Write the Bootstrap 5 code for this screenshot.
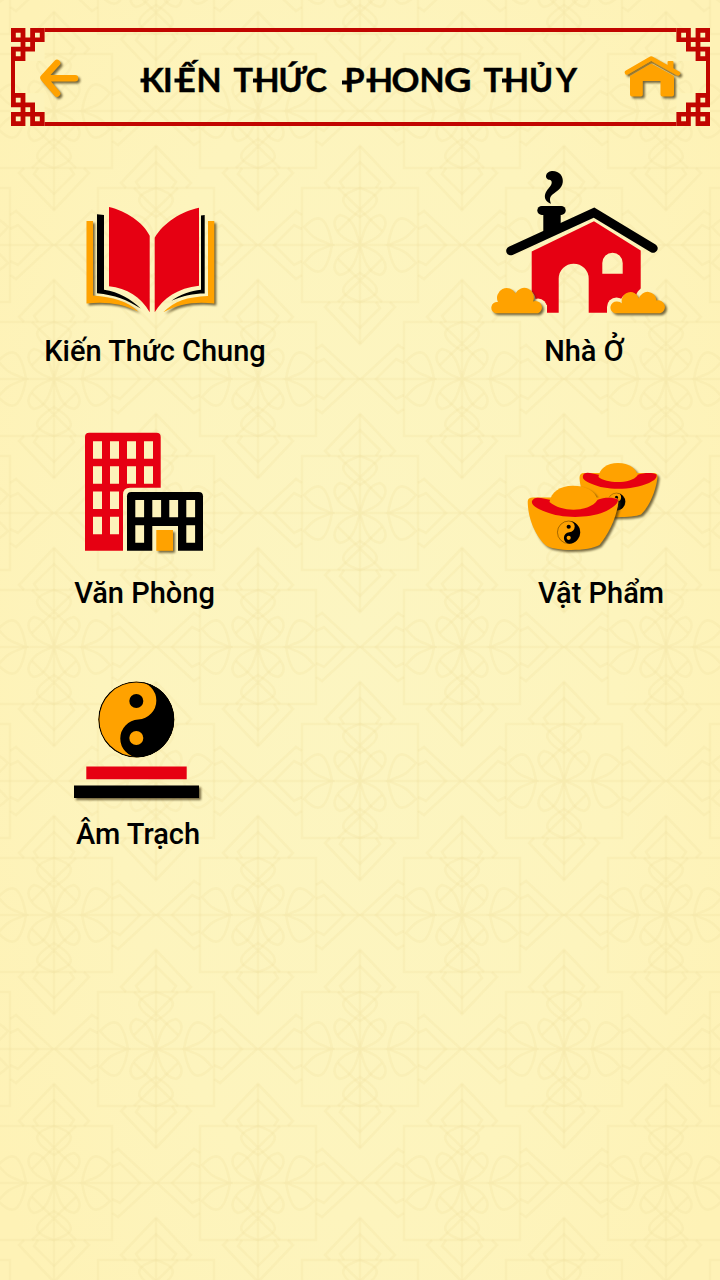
<!DOCTYPE html>
<html lang="vi">
<head>
<meta charset="utf-8">
<meta name="viewport" content="width=device-width, initial-scale=1">
<title>Kiến Thức Phong Thủy</title>
<link href="https://cdn.jsdelivr.net/npm/bootstrap@5.3.0/dist/css/bootstrap.min.css" rel="stylesheet">
<style>
  body { font-family: Roboto, "Noto Sans", sans-serif; color: #000; background: #fdf3bb; }
  .screen { width: 720px; height: 1280px; background: radial-gradient(ellipse 60% 75% at 50% 50%, #fcf5c1 0%, #fdf4bd 60%, #fef2b6 100%); }
  .backdrop { z-index: 0; }
  .title-bar { height: 98px; margin: 28px 10px 0 11px; border: 4px solid #c10500; }
  .title-bar .frame-corners { top: -4px; left: -4px; }
  .title-text { font-family: Lato, "Open Sans", sans-serif; font-weight: 700; stroke: #000; stroke-width: .4px; }
  .topics { padding-top: 34px; }
  .topic-row { height: 241.6px; }
  .topic { color: #000; }
  .topic-label { font-size: 29px; font-weight: 500; line-height: 42px; }
  .w-chung { width: 310px; }
  .w-nha { width: 272px; }
  .w-van { width: 289px; }
  .w-vat { width: 238px; }
  .w-am { width: 276px; }
  .shade { filter: drop-shadow(2px 2px .8px rgba(60, 45, 10, .7)); }
</style>
</head>
<body>
<main class="screen position-relative overflow-hidden">
  <svg class="backdrop position-absolute top-0 start-0" width="720" height="1280" aria-hidden="true">
    <defs>
      <g id="motif" fill="none" stroke="#efdf9e" stroke-width="2.6" stroke-opacity=".26">
        <rect x="-58" y="-57" width="116" height="114"/>
        <path d="M-102 0H102M0-99V99" />
        <path d="M-58-30l-6-4L-101 0l37 34 6-4M58-30l6-4L101 0 64 34l-6-4"/>
        <path d="M-30-57l-5-5L0-99 35-62l-5 5M-30 57l-5 5L0 99 35 62l-5-5"/>
        <path d="M-58-16l-8-4L-86 0l20 20 8-4M58-16l8-4L86 0 66 20l-8-4M-16-57l-4-6L0-83l20 20-4 6M-16 57l-4 6L0 83l20-20-4-6"/>
        <path d="M0-28C-28-45-16-52 0-57 16-52 28-45 0-28ZM0 28C-28 45-16 52 0 57 16 52 28 45 0 28Z"/>
        <path d="M-28 0C-34-34-44-30-56-18-46-6-44-6-28 0-44 6-46 6-56 18-44 30-34 34-28 0ZM28 0C34-34 44-30 56-18 46-6 44-6 28 0 44 6 46 6 56 18 44 30 34 34 28 0Z"/>
        <path d="M0 0C-28-8-30-26-20-30-8-28-4-16 0 0 4-16 8-28 20-30 30-26 28-8 0 0-28 8-30 26-20 30-8 28-4 16 0 0 4 16 8 28 20 30 30 26 28 8 0 0Z"/>
        <path d="M-22-57L22-14M22-57L-22-14M-22 57L22 14M22 57L-22 14"/>
      </g>
      <pattern id="lattice" width="204" height="268" patternUnits="userSpaceOnUse" x="54" y="915">
        <use href="#motif"/><use href="#motif" x="204"/>
        <use href="#motif" y="268"/><use href="#motif" x="204" y="268"/>
        <use href="#motif" x="102" y="134"/>
      </pattern>
    </defs>
    <rect width="720" height="1280" fill="url(#lattice)"/>
  </svg>

  <header class="title-bar position-relative">
    <svg class="frame-corners position-absolute" width="699" height="98" viewBox="11 28 699 98">
      <defs>
        <g id="corner">
          <rect width="33.6" height="32.9" fill="#fdf3ba"/>
          <path fill="#c10500" fill-rule="evenodd" transform="scale(4.8 4.7)" d="M0 0h3v2h1V0h3v3H5v2H3v2H0V4h2V3H0ZM1 1v1h1V1ZM5 1v1h1V1ZM3 3v1h1V3ZM1 5v1h1V5Z"/>
        </g>
      </defs>
      <use href="#corner" transform="translate(11 28)"/>
      <use href="#corner" transform="translate(710 28) scale(-1 1)"/>
      <use href="#corner" transform="translate(11 126) scale(1 -1)"/>
      <use href="#corner" transform="translate(710 126) scale(-1 -1)"/>
    </svg>
    <div class="d-flex justify-content-between align-items-center h-100 position-relative">
      <a href="#" aria-label="Quay lại" class="d-block">
        <svg class="d-block" width="100" height="90" viewBox="15 32 100 90">
          <path class="shade" d="M57 63 43.500 77.800 57 93.500M45 78.200H75" fill="none" stroke="#ffa200" stroke-width="6.600" stroke-linecap="round" stroke-linejoin="round"/>
        </svg>
      </a>
      <h1 class="m-0 lh-1">
        <svg class="d-block" width="470" height="90" viewBox="126 32 470 90">
          <text class="title-text" font-size="32.500" y="91.700" x="141.500 163 177 196.500 226 233.500 254.500 278.500 305.500 330 344.500 368">KIẾN THỨC PH<tspan x="391.500" textLength="28" lengthAdjust="spacingAndGlyphs">O</tspan><tspan x="419.500">N</tspan><tspan x="444" textLength="27.500" lengthAdjust="spacingAndGlyphs">G</tspan><tspan x="475 483.500 504 529 556"> THỦY</tspan></text>
          <path d="M140.500 80.500h6M174.500 80.500h7M253 80.500h6M342 82.500h7M366.500 80.500h6M502 80.500h7" stroke="#000" stroke-width="4"/>
        </svg>
      </h1>
      <a href="#" aria-label="Trang chủ" class="d-block">
        <svg class="d-block" width="100" height="90" viewBox="606.500 32 100 90">
          <g class="shade" fill="#ffa200">
            <path d="M668 68V62q0-1 1-1h4q1 0 1 1v8Z"/>
            <path d="M627.500 72.500 651.700 58.500 678.500 73.500" fill="none" stroke="#ffa200" stroke-width="4.500" stroke-linejoin="round" stroke-linecap="round"/>
            <path d="M630.500 76 651.700 63.500 674.500 76V94.500q0 2-2 2H663q-2 0-2-2V81H643.300V94.500q0 2-2 2H632.500q-2 0-2-2Z"/>
          </g>
          <path d="M629 75.500 651.700 62 676 75.500" fill="none" stroke="#a87c20" stroke-width="1"/>
        </svg>
      </a>
    </div>
  </header>

  <section class="topics position-relative">
    <div class="topic-row d-flex justify-content-between">
      <a href="#" class="topic w-chung d-flex flex-column align-items-center text-decoration-none">
        <svg width="200" height="170" viewBox="55 160 200 170">
          <g class="shade" fill="#ffa200">
            <path d="M86.500 221H93V295.500C113 297 127 301 138.500 311.700 122 303.500 106 301.500 86.500 303.500Z"/>
            <path d="M208 221H214.300V303.500C195 301.500 179 303.500 163.300 312.300 174 301 187 297 208 296Z"/>
          </g>
          <path d="M97 214.300 104 215V289.700C119 292 131 299 140.700 308.500 127 300 115 295 97 293.300Z"/>
          <path d="M201 215.500 204.700 215V293.500C193 293.500 183 296 171.500 300.700 180 294 191 291 201 289.700Z"/>
          <path fill="#e60012" d="M109 207C126 211 143 222 149.700 235.700V312.300C141 297 127 288 109 286.300Z"/>
          <path fill="#e60012" d="M199 207.700C182 211 163 223 154.700 237.700V312.300C163 298 178 288 199 285.700Z"/>
        </svg>
        <span class="topic-label">Kiến Thức Chung</span>
      </a>
      <a href="#" class="topic w-nha d-flex flex-column align-items-center text-decoration-none">
        <svg width="200" height="170" viewBox="484 160 200 170">
          <path fill="#e60012" fill-rule="evenodd" d="M531.700 251.500 594 221.300 640.700 250.500V312.800H588.700V278.700a15 15 0 0 0-30 0V312.800H531.700ZM602.300 273.700H622.700V263a10.200 10.200 0 0 0-20.400 0Z"/>
          <path d="M510.700 250.800 594 212.600 653.200 248.300" fill="none" stroke="#000" stroke-width="9" stroke-linecap="round"/>
          <path d="M543.300 210H560.700V229L543.300 237Z"/>
          <rect x="537.300" y="206" width="28.400" height="8.900" rx="4.450"/>
          <path d="M551 203.700C546 202 544 198 545.200 194 546.500 189.500 551 187 551.700 183 552 180 550 180 548 179.500 544.500 177.500 545.500 172 551.700 171 559 170.500 563.500 176 562.800 182 562 189 556 191.500 552.500 194.500 549.500 197 549.500 200 551 203.700Z"/>
          <g fill="#fdf3bb">
            <circle cx="524" cy="300.500" r="11.500"/><circle cx="538" cy="307.500" r="9"/><circle cx="616.500" cy="307" r="9.500"/><circle cx="630.500" cy="303.500" r="10.500"/><circle cx="647.700" cy="298.500" r="12"/>
            <path d="M524 305H547V315H524ZM607 307H660V315H607Z"/>
          </g>
          <g class="shade" fill="#ffa200">
            <path d="M496 313.300a5.600 5.600 0 0 1 2-11.200A9.300 9.300 0 0 1 515.500 293.500 9.300 9.300 0 0 1 533 301.500 6.200 6.200 0 0 1 538 313.300Z"/>
            <path d="M615 313.300a6 6 0 0 1 2-11.800q3 0 5 2A8 8 0 0 1 639 298.500 8.900 8.900 0 0 1 656.500 300.500 6.500 6.500 0 0 1 660 313.300Z"/>
          </g>
        </svg>
        <span class="topic-label">Nhà Ở</span>
      </a>
    </div>

    <div class="topic-row d-flex justify-content-between">
      <a href="#" class="topic w-van d-flex flex-column align-items-center text-decoration-none">
        <svg width="200" height="170" viewBox="45 402 200 170">
          <path fill="#e60012" d="M85 437q0-4.200 4.200-4.200H156.500q4.200 0 4.200 4.200V487.700H130q-7 0-7 7V550.700H85Z"/>
          <path d="M127 496.300q0-4.300 4.300-4.300H198.700q4.300 0 4.300 4.300V550.700H127Z"/>
          <g fill="#fdf3bb">
            <path d="M93 441.300h9v17.400h-9zm17 0h9v17.400h-9zm17 0h9v17.400h-9zm17 0h9v17.400h-9zM93 466.300h9v17.400h-9zm17 0h9v17.400h-9zm17 0h9v17.400h-9zm17 0h9v17.400h-9zM93 491.600h9v17.400h-9zm17 0h9v17.400h-9zM93 516.800h9v17.400h-9zm17 0h9v17.400h-9z"/>
            <path d="M135.300 500h8.800v17.200h-8.800zm17 0h8.800v17.200h-8.800zm17 0h8.800v17.200h-8.800zm17 0h8.800v17.200h-8.800zM135.300 525.300h8.800v17.400h-8.800zm51 0h8.800v17.400h-8.800zM152.300 526H178v25H152.300z"/>
          </g>
          <path class="shade" fill="#ffa200" d="M156.300 530H173V550.800H156.300Z"/>
        </svg>
        <span class="topic-label">Văn Phòng</span>
      </a>
      <a href="#" class="topic w-vat d-flex flex-column align-items-center text-decoration-none">
        <svg width="200" height="170" viewBox="501 402 200 170">
          <defs>
            <g id="taiji">
              <circle r="38" fill="#ffa200"/>
              <path d="M2-37.950A38 38 0 0 1 2 37.950 19 19 0 0 1 2 0 19 19 0 0 0 2-37.950Z"/>
              <circle cy="-18.500" r="7"/><circle cy="18.500" r="7" fill="#ffa200"/>
              <circle r="37.500" fill="none" stroke="#000" stroke-width="1.200"/>
            </g>
          </defs>
          <g class="shade">
            <path fill="#ffa200" d="M579.500 478Q579.500 473 584 473H654Q658.500 473 657.300 479C655 494 648 508 641 514.500 632 518 604 518 595 514.500 587 505 580 490 579.500 478Z"/>
            <path fill="#e60012" d="M583 475.500Q584 472 590 473L600 475H637C645 472.500 652 472.500 656.500 474.500 657.500 478 654 480.500 649 483 632 490.500 606 490.500 592 484 585 481 582 479 583 475.500Z"/>
            <path fill="#ffa200" d="M598.500 477C599 469 607 463 618 463S637 469 637.500 475.500C631 484 607 484 598.500 477Z"/>
          </g>
          <use href="#taiji" transform="translate(616.500 501.700) scale(.23)"/>
          <g class="shade">
            <path fill="#ffa200" d="M527.700 502Q527.500 497.500 533 497.500H613Q619 497.500 618.300 503C616 520 607 536 599.500 545 590 551 556 552 546 545.500 536 537 528 519 527.700 502Z"/>
            <path fill="#e60012" d="M532 501Q534 496.500 541 498L551 500H597C605 496.800 614 497.500 618 499.500 618.500 504 612 508.500 604 512 587 519 560 518 546 512 536 508 531 505 532 501Z"/>
            <path fill="#ffa200" d="M549.500 502C551 492 560 485.700 572.700 485.700S595 490 597.500 500C590 512 562 513 549.500 502Z"/>
          </g>
          <use href="#taiji" transform="translate(568.700 532.300) scale(.3)"/>
        </svg>
        <span class="topic-label">Vật Phẩm</span>
      </a>
    </div>

    <div class="topic-row d-flex">
      <a href="#" class="topic w-am d-flex flex-column align-items-center text-decoration-none">
        <svg width="200" height="170" viewBox="38 643.200 200 170">
          <clipPath id="disc"><circle cx="136.300" cy="719.700" r="38.200"/></clipPath>
          <g clip-path="url(#disc)"><use href="#taiji" transform="translate(136.300 719.700)"/></g>
          <path fill="#e60012" d="M86.300 766.700H186.700V779.400H86.300Z"/>
          <path class="shade" d="M74 785.800H199V798.200H74Z"/>
        </svg>
        <span class="topic-label">Âm Trạch</span>
      </a>
    </div>
  </section>
</main>
<script src="https://cdn.jsdelivr.net/npm/bootstrap@5.3.0/dist/js/bootstrap.bundle.min.js"></script>
</body>
</html>
